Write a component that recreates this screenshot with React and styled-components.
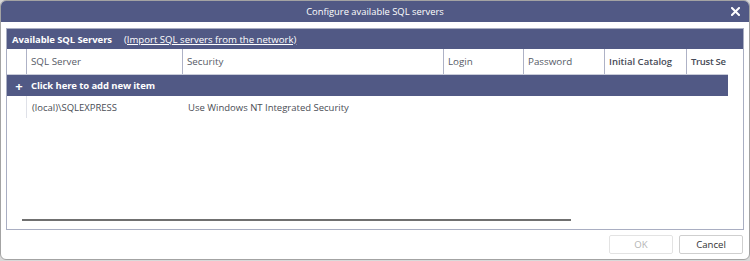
import styled, { createGlobalStyle } from "styled-components";

const GlobalStyle = createGlobalStyle`
  html, body {
    margin: 0;
    padding: 0;
    background: #d9d9d9;
  }
  body {
    font-family: "Open Sans", "Noto Sans", sans-serif;
    font-size: 9.5px;
  }
`;

const columns = [
  { title: "SQL Server", width: 156 },
  { title: "Security", width: 261 },
  { title: "Login", width: 80 },
  { title: "Password", width: 81 },
  { title: "Initial Catalog", width: 82, strong: true },
  { title: "Trust Se", width: 40, strong: true, last: true },
];

const rows = [
  { server: "(local)\\SQLEXPRESS", security: "Use Windows NT Integrated Security" },
];

const App = () => {
  return (
    <>
      <GlobalStyle />
      <Window>
        <TitleBar>
          <Title>Configure available SQL servers</Title>
          <CloseBtn>
            <svg width="9" height="9" viewBox="0 0 9 9">
              <path d="M1 1 L8 8 M8 1 L1 8" stroke="#fff" strokeWidth="2" strokeLinecap="square" />
            </svg>
          </CloseBtn>
        </TitleBar>

        <Body>
          <Panel>
            <PanelHeader>
              <PanelTitle>Available SQL Servers</PanelTitle>
              <ImportLink>(Import SQL servers from the network)</ImportLink>
            </PanelHeader>

            <Grid>
              <HeaderRow>
                <IndicatorCell />
                {columns.map((c) => (
                  <HeaderCell key={c.title} $width={c.width} $strong={c.strong} $last={c.last}>
                    {c.title}
                  </HeaderCell>
                ))}
              </HeaderRow>

              <NewItemRow>
                <Plus>+</Plus>
                <span>Click here to add new item</span>
              </NewItemRow>

              {rows.map((r) => (
                <DataRow key={r.server}>
                  <IndicatorCell $data />
                  <DataCell $width={156}>{r.server}</DataCell>
                  <DataCell $width={261}>{r.security}</DataCell>
                </DataRow>
              ))}

              <EmptyArea>
                <HScroll />
              </EmptyArea>
            </Grid>
          </Panel>

          <Footer>
            <Button disabled>OK</Button>
            <Button>Cancel</Button>
          </Footer>
        </Body>
      </Window>
    </>
  );
};

const Window = styled.div`
  width: 750px;
  height: 260px;
  box-sizing: border-box;
  border: 1px solid #a3a3a3;
  border-radius: 6px;
  background: #ffffff;
  overflow: hidden;
  display: flex;
  flex-direction: column;
`;

const TitleBar = styled.div`
  height: 21px;
  background: #515985;
  display: flex;
  align-items: center;
  justify-content: center;
  position: relative;
  flex-shrink: 0;
`;

const Title = styled.div`
  color: #ffffff;
  font-size: 9.4px;
  line-height: 21px;
`;

const CloseBtn = styled.div`
  position: absolute;
  right: 9px;
  top: 6px;
  width: 9px;
  height: 9px;
  display: flex;
`;

const Body = styled.div`
  flex: 1;
  display: flex;
  flex-direction: column;
  padding: 6px 5px 0 5px;
`;

const Panel = styled.div`
  height: 202px;
  box-sizing: border-box;
  border: 1px solid #a9aec2;
  display: flex;
  flex-direction: column;
`;

const PanelHeader = styled.div`
  height: 20px;
  background: #515985;
  display: flex;
  align-items: center;
  padding-left: 5px;
  gap: 12px;
  flex-shrink: 0;
`;

const PanelTitle = styled.span`
  color: #ffffff;
  font-weight: 700;
  letter-spacing: -0.1px;
`;

const ImportLink = styled.span`
  color: #ffffff;
  text-decoration: underline;
  font-size: 9.6px;
`;

const Grid = styled.div`
  flex: 1;
  display: flex;
  flex-direction: column;
  padding-right: 15px;
`;

const HeaderRow = styled.div`
  height: 25px;
  display: flex;
  border-bottom: 1px solid #c9ccd9;
  flex-shrink: 0;
`;

const IndicatorCell = styled.div`
  width: 20px;
  flex-shrink: 0;
  border-right: 1px solid ${(p) => (p.$data ? "#dfe1e8" : "#aeb2c6")};
  box-sizing: border-box;
`;

const HeaderCell = styled.div`
  width: ${(p) => p.$width}px;
  flex-shrink: 0;
  box-sizing: border-box;
  border-right: ${(p) => (p.$last ? "none" : "1px solid #aeb2c6")};
  padding-left: 4px;
  display: flex;
  align-items: center;
  color: ${(p) => (p.$strong ? "#474b57" : "#555a66")};
  font-weight: ${(p) => (p.$strong ? 600 : 400)};
  font-size: ${(p) => (p.$strong ? "9.5px" : "9.8px")};
  letter-spacing: ${(p) => (p.$last ? "-0.3px" : "0")};
  white-space: nowrap;
  overflow: hidden;
`;

const NewItemRow = styled.div`
  height: 21px;
  background: #515985;
  display: flex;
  align-items: center;
  color: #ffffff;
  font-weight: 700;
  letter-spacing: -0.1px;
  flex-shrink: 0;
`;

const Plus = styled.span`
  width: 24px;
  text-align: center;
  font-size: 13px;
`;

const DataRow = styled.div`
  height: 22px;
  display: flex;
  flex-shrink: 0;
`;

const DataCell = styled.div`
  width: ${(p) => p.$width}px;
  flex-shrink: 0;
  box-sizing: border-box;
  padding-left: 5px;
  display: flex;
  align-items: center;
  color: #4a4d55;
  white-space: nowrap;
`;

const EmptyArea = styled.div`
  flex: 1;
  display: flex;
  align-items: flex-end;
  padding: 0 0 8px 15px;
`;

const HScroll = styled.div`
  width: 549px;
  height: 2px;
  background: #707070;
`;

const Footer = styled.div`
  display: flex;
  justify-content: flex-end;
  gap: 6px;
  padding: 5px 1px 0 0;
`;

const Button = styled.button`
  width: 64px;
  height: 19px;
  box-sizing: border-box;
  background: #ffffff;
  border: 1px solid ${(p) => (p.disabled ? "#e3e3e3" : "#cfcfcf")};
  border-radius: 2px;
  color: ${(p) => (p.disabled ? "#b5b5b5" : "#333333")};
  font-family: "Open Sans", "Noto Sans", sans-serif;
  font-size: 9.6px;
  padding: 0;
`;

export default App;
